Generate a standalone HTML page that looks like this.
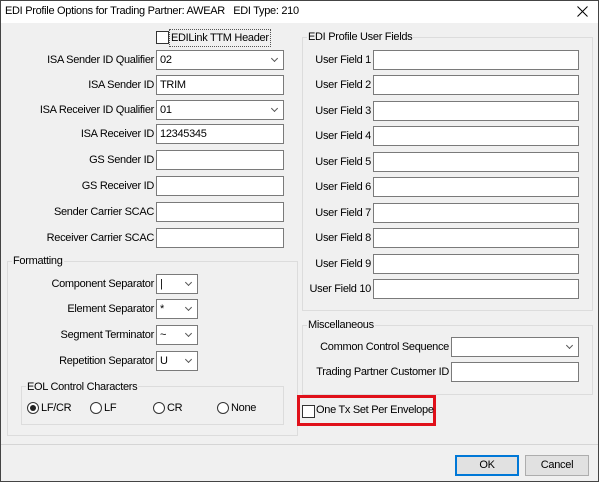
<!DOCTYPE html>
<html><head><style>
*{box-sizing:border-box;margin:0;padding:0}
body{width:602px;height:483px;overflow:hidden;background:#fff;font-family:"Liberation Sans",sans-serif;font-size:11px;letter-spacing:-0.3px;color:#000;position:relative}
.win{position:absolute;left:0;top:0;width:599px;height:482px;border:1px solid #444;background:#f0f0f0}
.title{position:absolute;left:0;top:0;width:597px;height:22px;background:#fff}
.a{position:absolute;white-space:nowrap}
.lbl{position:absolute;text-align:right;white-space:nowrap;line-height:20px}
.inp{position:absolute;height:20px;background:#fff;border:1px solid #7a7a7a;padding-left:3px;line-height:18px}
.cb::after{content:"";position:absolute;right:6px;top:5px;width:4px;height:4px;border-right:1px solid #555;border-bottom:1px solid #555;transform:rotate(45deg)}
.grp{position:absolute;border:1px solid #dcdcdc}
.leg{position:absolute;background:#f0f0f0;padding:0 1px;line-height:14px}
.chk{position:absolute;width:13px;height:13px;border:1px solid #333;background:#fff}
.rad{position:absolute;width:12px;height:12px;border:1px solid #333;border-radius:50%;background:#fff}
.btn{position:absolute;height:21px;background:#e1e1e1;border:1px solid #adadad;text-align:center;line-height:19px}
</style></head><body>
<div class="win">
<div class="title"></div>
</div>
<div class="a" style="left:5px;top:5px">EDI Profile Options for Trading Partner: AWEAR&nbsp;&nbsp;&nbsp;EDI Type: 210</div>
<svg class="a" style="left:577px;top:6px" width="11" height="11"><path d="M0.5 0.5L10.5 10.5M10.5 0.5L0.5 10.5" stroke="#000" stroke-width="1"/></svg>

<div class="chk" style="left:156px;top:31px"></div>
<div class="a" style="left:169px;top:29px;border:1px dotted #555;padding:1px 1px;line-height:14px">EDILink TTM Header</div>

<div class="lbl" style="right:448px;top:50px">ISA Sender ID Qualifier</div><div class="inp cb" style="left:156px;top:50px;width:128px">02</div>
<div class="lbl" style="right:448px;top:75px">ISA Sender ID</div><div class="inp" style="left:156px;top:75px;width:128px">TRIM</div>
<div class="lbl" style="right:448px;top:100px">ISA Receiver ID Qualifier</div><div class="inp cb" style="left:156px;top:100px;width:128px">01</div>
<div class="lbl" style="right:448px;top:124px">ISA Receiver ID</div><div class="inp" style="left:156px;top:124px;width:128px">12345345</div>
<div class="lbl" style="right:448px;top:150px">GS Sender ID</div><div class="inp" style="left:156px;top:150px;width:128px"></div>
<div class="lbl" style="right:448px;top:176px">GS Receiver ID</div><div class="inp" style="left:156px;top:176px;width:128px"></div>
<div class="lbl" style="right:448px;top:202px">Sender Carrier SCAC</div><div class="inp" style="left:156px;top:202px;width:128px"></div>
<div class="lbl" style="right:448px;top:228px">Receiver Carrier SCAC</div><div class="inp" style="left:156px;top:228px;width:128px"></div>

<div class="grp" style="left:7px;top:261px;width:291px;height:175px"></div>
<div class="leg" style="left:12px;top:254px">Formatting</div>
<div class="lbl" style="right:448px;top:274px">Component Separator</div><div class="inp cb" style="left:156px;top:274px;width:42px">|</div>
<div class="lbl" style="right:448px;top:299px">Element Separator</div><div class="inp cb" style="left:156px;top:299px;width:42px">*</div>
<div class="lbl" style="right:448px;top:325px">Segment Terminator</div><div class="inp cb" style="left:156px;top:325px;width:42px">~</div>
<div class="lbl" style="right:448px;top:351px">Repetition Separator</div><div class="inp cb" style="left:156px;top:351px;width:42px">U</div>
<div class="grp" style="left:21px;top:386px;width:263px;height:39px"></div>
<div class="leg" style="left:26px;top:380px">EOL Control Characters</div>
<div class="rad" style="left:27px;top:402px"><div style="position:absolute;left:2px;top:2px;width:6px;height:6px;border-radius:50%;background:#222"></div></div><div class="a" style="left:41px;top:402px">LF/CR</div>
<div class="rad" style="left:90px;top:402px"></div><div class="a" style="left:104px;top:402px">LF</div>
<div class="rad" style="left:153px;top:402px"></div><div class="a" style="left:167px;top:402px">CR</div>
<div class="rad" style="left:217px;top:402px"></div><div class="a" style="left:231px;top:402px">None</div>

<div class="grp" style="left:302px;top:37px;width:291px;height:274px"></div>
<div class="leg" style="left:307px;top:30px">EDI Profile User Fields</div>
<div class="lbl" style="right:231px;top:50px">User Field 1</div><div class="inp" style="left:373px;top:50px;width:206px"></div>
<div class="lbl" style="right:231px;top:75px">User Field 2</div><div class="inp" style="left:373px;top:75px;width:206px"></div>
<div class="lbl" style="right:231px;top:101px">User Field 3</div><div class="inp" style="left:373px;top:101px;width:206px"></div>
<div class="lbl" style="right:231px;top:126px">User Field 4</div><div class="inp" style="left:373px;top:126px;width:206px"></div>
<div class="lbl" style="right:231px;top:152px">User Field 5</div><div class="inp" style="left:373px;top:152px;width:206px"></div>
<div class="lbl" style="right:231px;top:177px">User Field 6</div><div class="inp" style="left:373px;top:177px;width:206px"></div>
<div class="lbl" style="right:231px;top:203px">User Field 7</div><div class="inp" style="left:373px;top:203px;width:206px"></div>
<div class="lbl" style="right:231px;top:228px">User Field 8</div><div class="inp" style="left:373px;top:228px;width:206px"></div>
<div class="lbl" style="right:231px;top:254px">User Field 9</div><div class="inp" style="left:373px;top:254px;width:206px"></div>
<div class="lbl" style="right:231px;top:279px">User Field 10</div><div class="inp" style="left:373px;top:279px;width:206px"></div>

<div class="grp" style="left:302px;top:325px;width:291px;height:70px"></div>
<div class="leg" style="left:307px;top:318px">Miscellaneous</div>
<div class="lbl" style="right:153px;top:337px">Common Control Sequence</div><div class="inp cb" style="left:451px;top:337px;width:128px"></div>
<div class="lbl" style="right:153px;top:362px">Trading Partner Customer ID</div><div class="inp" style="left:451px;top:362px;width:128px"></div>

<div class="a" style="left:297px;top:395px;width:139px;height:31px;border:3px solid #e0101a"></div>
<div class="chk" style="left:302px;top:405px"></div>
<div class="a" style="left:316px;top:404px">One Tx Set Per Envelope</div>

<div class="a" style="left:1px;top:444px;width:597px;height:1px;background:#d5d5d5"></div>
<div class="btn" style="left:455px;top:455px;width:64px;border:2px solid #0078d7;line-height:17px">OK</div>
<div class="btn" style="left:525px;top:455px;width:64px">Cancel</div>
</body></html>
